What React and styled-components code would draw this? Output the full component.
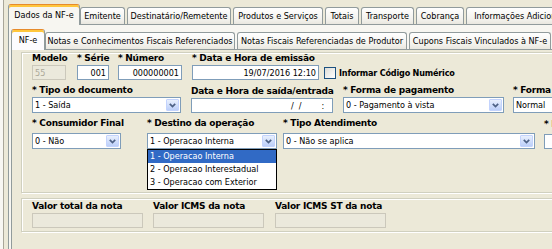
import styled, { createGlobalStyle } from "styled-components";

const GlobalStyle = createGlobalStyle`
  html, body {
    margin: 0;
    padding: 0;
    background: #ece9d8;
  }
  body {
    font-family: "DejaVu Sans Condensed", "Liberation Sans", sans-serif;
    font-size: 9px;
    color: #000;
  }
  * {
    box-sizing: border-box;
  }
`;

const OUTER_TABS = [
  { title: "Dados da NF-e", w: 72, active: true },
  { title: "Emitente", w: 45 },
  { title: "Destinatário/Remetente", w: 104 },
  { title: "Produtos e Serviços", w: 90 },
  { title: "Totais", w: 34 },
  { title: "Transporte", w: 53 },
  { title: "Cobrança", w: 48 },
  { title: "Informações Adicionais", w: 110 },
];

const INNER_TABS = [
  { title: "NF-e", w: 34, active: true },
  { title: "Notas e Conhecimentos Fiscais Referenciados", w: 190 },
  { title: "Notas Fiscais Referenciadas de Produtor", w: 170 },
  { title: "Cupons Fiscais Vinculados à NF-e", w: 142 },
];

const DESTINOS = [
  "1 - Operacao Interna",
  "2 - Operacao Interestadual",
  "3 - Operacao com Exterior",
];

const Screen = styled.div`
  width: 552px;
  height: 249px;
  overflow: hidden;
  background: #ece9d8;
  border-left: 3px solid #f8f7f3;
  box-shadow: inset 1px 0 0 #a9a699;
  padding: 4px 0 0 5px;
`;

const Tabs = styled.div`
  width: 720px;
`;

const TabStrip = styled.div`
  display: flex;
  align-items: flex-end;
  height: 20px;
  position: relative;
  z-index: 1;
`;

const Tab = styled.div`
  flex: none;
  width: ${(p) => p.$w}px;
  height: ${(p) => (p.$active ? 21 : 17)}px;
  margin-right: ${(p) => (p.$active ? 0 : 2)}px;
  margin-bottom: ${(p) => (p.$active ? -1 : 0)}px;
  border: 1px solid #919b9c;
  border-bottom: none;
  border-top-color: ${(p) => (p.$active ? "#e68b2c" : "#919b9c")};
  border-radius: 3px 3px 0 0;
  box-shadow: ${(p) => (p.$active ? "inset 0 2px 0 #ffc73c" : "none")};
  background: ${(p) =>
    p.$active ? p.$bg : "linear-gradient(#ffffff, #f3f2ed 70%, #e9e7df)"};
  display: flex;
  align-items: center;
  justify-content: center;
  white-space: nowrap;
  overflow: hidden;
`;

const Panel = styled.div`
  border: 1px solid #919b9c;
  background: ${(p) => p.$bg};
  padding: ${(p) => p.$pad};
  min-height: ${(p) => p.$minH}px;
`;

const Group = styled.div`
  border: 1px solid #d0d0bf;
  box-shadow: inset 1px 1px 0 #fff, 1px 1px 0 #fff;
  padding: ${(p) => p.$pad};
  margin-top: ${(p) => p.$mt || 0}px;
`;

const Row = styled.div`
  display: flex;
  align-items: flex-end;
  margin-top: ${(p) => p.$mt}px;
  --label-gap: ${(p) => p.$gap}px;
`;

const Field = styled.div`
  flex: none;
  width: ${(p) => p.$w}px;
`;

const Label = styled.div`
  font-family: "DejaVu Sans", "Liberation Sans", sans-serif;
  font-weight: bold;
  font-size: 9px;
  letter-spacing: -0.25px;
  line-height: 12px;
  height: 12px;
  margin-bottom: var(--label-gap);
  white-space: nowrap;
`;

const Edit = styled.div`
  width: ${(p) => p.$w}px;
  height: 15px;
  border: 1px solid ${(p) => (p.$disabled ? "#cbc8bb" : "#7f9db9")};
  background: ${(p) => (p.$disabled ? "#ebe9dc" : "#fff")};
  color: ${(p) => (p.$disabled ? "#aca899" : "#000")};
  display: flex;
  align-items: center;
  justify-content: ${(p) => (p.$right ? "flex-end" : "flex-start")};
  padding: 0 2px;
  white-space: nowrap;
  overflow: hidden;
`;

const Mask = styled.span`
  margin-left: ${(p) => p.$at}px;
  white-space: pre;
`;

const Select = styled.div`
  position: relative;
  width: ${(p) => p.$w}px;
  height: 16px;
  border: 1px solid #7f9db9;
  background: #fff;
  display: flex;
  align-items: center;
  padding-left: 2px;
`;

const SelectText = styled.span`
  flex: 1;
  white-space: nowrap;
  overflow: hidden;
`;

const DropButton = styled.span`
  flex: none;
  width: 13px;
  height: 12px;
  margin: 0 1px;
  border: 1px solid #c3d3fd;
  border-radius: 1px;
  background: linear-gradient(#e9f0fd, #bccff9);
  display: flex;
  align-items: center;
  justify-content: center;
`;

const DropList = styled.ul`
  position: absolute;
  left: -1px;
  right: -1px;
  top: 15px;
  margin: 0;
  padding: 0;
  list-style: none;
  border: 1px solid #000;
  background: #fff;
  z-index: 5;
`;

const DropItem = styled.li`
  height: 13px;
  line-height: 13px;
  padding-left: 2px;
  white-space: nowrap;
  background: ${(p) => (p.$active ? "#316ac5" : "transparent")};
  color: ${(p) => (p.$active ? "#fff" : "#000")};
`;

const Check = styled.div`
  flex: none;
  display: flex;
  align-items: center;
  gap: 3px;
  height: 15px;
  font-weight: bold;
  letter-spacing: -0.2px;
  white-space: nowrap;
`;

const CheckBox = styled.span`
  width: 12px;
  height: 12px;
  border: 1px solid #1c5180;
  background: linear-gradient(135deg, #dcdcd7, #ffffff);
`;

function Combo({ w, value, options }) {
  return (
    <Select $w={w}>
      <SelectText>{value}</SelectText>
      <DropButton>
        <svg width="7" height="5" viewBox="0 0 7 5">
          <path d="M0.8 0.8 L3.5 3.6 L6.2 0.8" fill="none" stroke="#4d6185" strokeWidth="1.7" />
        </svg>
      </DropButton>
      {options && (
        <DropList>
          {options.map((o, i) => (
            <DropItem key={o} $active={i === 0}>
              {o}
            </DropItem>
          ))}
        </DropList>
      )}
    </Select>
  );
}

export default function App() {
  return (
    <>
      <GlobalStyle />
      <Screen>
        <Tabs>
          <TabStrip>
            {OUTER_TABS.map((t) => (
              <Tab key={t.title} $w={t.w} $active={t.active} $bg="#f7f6f1">
                {t.title}
              </Tab>
            ))}
          </TabStrip>
          <Panel $bg="#f7f6f1" $pad="4px 0 0 2px" $minH={240}>
            <TabStrip>
              {INNER_TABS.map((t) => (
                <Tab key={t.title} $w={t.w} $active={t.active} $bg="#fcfcfe">
                  {t.title}
                </Tab>
              ))}
            </TabStrip>
            <Panel $bg="#ece9d8" $pad="2px 0 0 9px" $minH={220}>
              <Group $pad="0 0 43px 10px">
                <Row $mt={-1} $gap={1}>
                  <Field $w={45}>
                    <Label>Modelo</Label>
                    <Edit $w={34} $disabled>55</Edit>
                  </Field>
                  <Field $w={41}>
                    <Label>* Série</Label>
                    <Edit $w={32} $right>001</Edit>
                  </Field>
                  <Field $w={74}>
                    <Label>* Número</Label>
                    <Edit $w={64} $right>000000001</Edit>
                  </Field>
                  <Field $w={132}>
                    <Label>* Data e Hora de emissão</Label>
                    <Edit $w={127} $right>19/07/2016 12:10</Edit>
                  </Field>
                  <Check>
                    <CheckBox />
                    Informar Código Numérico
                  </Check>
                </Row>
                <Row $mt={4} $gap={1}>
                  <Field $w={159}>
                    <Label>* Tipo do documento</Label>
                    <Combo w={149} value="1 - Saída" />
                  </Field>
                  <Field $w={152}>
                    <Label>Data e Hora de saída/entrada</Label>
                    <Edit $w={142}>
                      <Mask $at={97}>/  /</Mask>
                      <Mask $at={20}>:</Mask>
                    </Edit>
                  </Field>
                  <Field $w={170}>
                    <Label>* Forma de pagamento</Label>
                    <Combo w={161} value="0 - Pagamento à vista" />
                  </Field>
                  <Field $w={140}>
                    <Label>* Forma de emissão</Label>
                    <Combo w={130} value="Normal" />
                  </Field>
                </Row>
                <Row $mt={4} $gap={4}>
                  <Field $w={115}>
                    <Label>* Consumidor Final</Label>
                    <Combo w={89} value="0 - Não" />
                  </Field>
                  <Field $w={136}>
                    <Label>* Destino da operação</Label>
                    <Combo w={130} value={DESTINOS[0]} options={DESTINOS} />
                  </Field>
                  <Field $w={261}>
                    <Label>* Tipo Atendimento</Label>
                    <Combo w={252} value="0 - Não se aplica" />
                  </Field>
                  <Field $w={120}>
                    <Label>* Finalidade</Label>
                    <Edit $w={110} />
                  </Field>
                </Row>
              </Group>
              <Group $mt={5} $pad="1px 0 3px 10px">
                <Row $mt={0} $gap={1}>
                  <Field $w={121}>
                    <Label>Valor total da nota</Label>
                    <Edit $w={111} $disabled />
                  </Field>
                  <Field $w={122}>
                    <Label>Valor ICMS da nota</Label>
                    <Edit $w={111} $disabled />
                  </Field>
                  <Field $w={122}>
                    <Label>Valor ICMS ST da nota</Label>
                    <Edit $w={111} $disabled />
                  </Field>
                </Row>
              </Group>
            </Panel>
          </Panel>
        </Tabs>
      </Screen>
    </>
  );
}
